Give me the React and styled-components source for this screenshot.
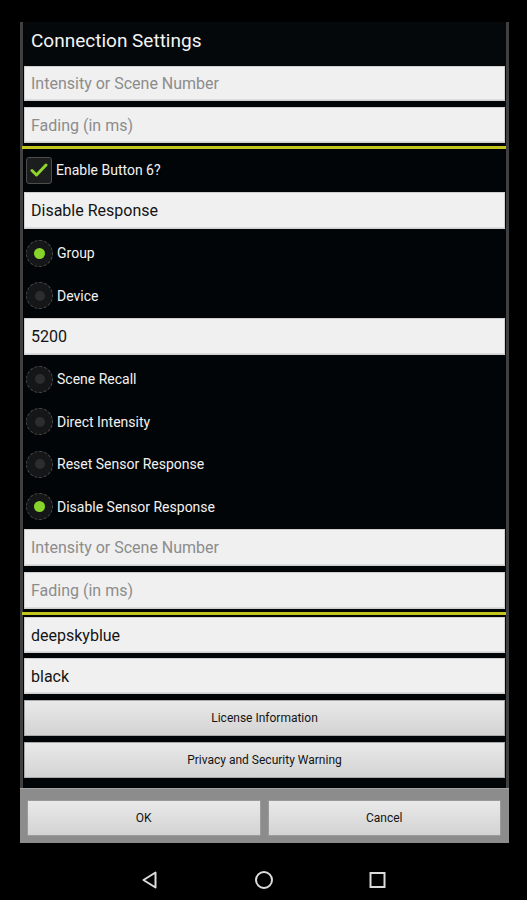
import React from "react";
import styled, { createGlobalStyle } from "styled-components";

const Global = createGlobalStyle`
  html, body { margin: 0; padding: 0; background: #000; }
  body { font-family: Roboto, "Noto Sans", "Liberation Sans", sans-serif; }
  * { box-sizing: border-box; }
`;

const Screen = styled.div`
  width: 527px;
  height: 900px;
  background: #000;
  display: flex;
  flex-direction: column;
  padding-top: 22px;
`;

const Dialog = styled.div`
  margin-left: 20px;
  width: 489px;
  display: flex;
  flex-direction: column;
`;

const Body = styled.div`
  display: flex;
  flex-direction: column;
  border-left: 3px solid #404040;
  border-right: 3px solid #404040;
  background: #020507;
  padding-bottom: 10px;
`;

const Title = styled.div`
  height: 44px;
  display: flex;
  align-items: center;
  padding-left: 8px;
  padding-bottom: 8px;
  color: #f4f4f4;
  font-size: 19px;
  background: #04080a;
`;

const Field = styled.div`
  margin: ${(p) => p.$mt || 0}px 1px 0 1px;
  height: ${(p) => p.$h || 36}px;
  background: #f0f0f0;
  border: 1px solid #cfcfcf;
  box-shadow: inset 0 -1px 0 #dcdcdc;
  display: flex;
  align-items: center;
  padding-left: 6px;
  font-size: 16px;
  color: ${(p) => (p.$placeholder ? "#8c8c8c" : "#141414")};
`;

const Divider = styled.div`
  margin-top: ${(p) => p.$mt || 0}px;
  margin-left: -1px;
  height: 3px;
  background: #c4c51c;
`;

const CheckRow = styled.div`
  height: 42px;
  display: flex;
  align-items: center;
  padding-left: 3px;
  gap: 4px;
  color: #f2f2f2;
  font-size: 14px;
`;

const Box = styled.div`
  width: 26px;
  height: 27px;
  border: 1.5px solid #4d4d4d;
  border-radius: 3px;
  background: #1b1d1e;
  display: flex;
  align-items: center;
  justify-content: center;
`;

const RadioGroup = styled.div`
  display: flex;
  flex-direction: column;
  padding: 3px 0 1px 0;
`;

const RadioRow = styled.div`
  height: 42.5px;
  display: flex;
  align-items: center;
  padding-left: 3px;
  gap: 4px;
  color: #f2f2f2;
  font-size: 14px;
`;

const Radio = styled.div`
  width: 27px;
  height: 27px;
  border-radius: 50%;
  background: #141617;
  border: 1.5px dashed #4a4a4a;
  display: flex;
  align-items: center;
  justify-content: center;
`;

const Dot = styled.div`
  width: ${(p) => (p.$on ? 11 : 10)}px;
  height: ${(p) => (p.$on ? 11 : 10)}px;
  border-radius: 50%;
  background: ${(p) => (p.$on ? "#86d42a" : "#2b2d2e")};
`;

const WideButton = styled.div`
  margin: ${(p) => p.$mt || 0}px 1px 0 1px;
  height: 36px;
  background: linear-gradient(#e9e9e9, #d3d3d3);
  border: 1px solid #a9a9a9;
  display: flex;
  align-items: center;
  justify-content: center;
  font-size: 12px;
  color: #141414;
`;

const Bar = styled.div`
  height: 55px;
  background: #8c8c8c;
  border-top: 1px solid #a4a4a4;
  display: grid;
  grid-template-columns: 1fr 1fr;
  gap: 7px;
  padding: 11px 8px 7px 7px;
`;

const BarButton = styled(WideButton)`
  margin: 0;
  border-color: #9a9a9a;
`;

const Nav = styled.div`
  margin-top: 22px;
  height: 30px;
  display: flex;
  align-items: center;
  justify-content: center;
  gap: 94px;
`;

const NavIcon = styled.svg`
  width: 20px;
  height: 20px;
  display: block;
`;

const RadioItem = ({ on, children }) => (
  <RadioRow>
    <Radio>
      <Dot $on={on} />
    </Radio>
    {children}
  </RadioRow>
);

export default function App() {
  return (
    <>
      <Global />
      <Screen>
        <Dialog>
          <Body>
            <Title>Connection Settings</Title>
            <Field $placeholder $h={35}>Intensity or Scene Number</Field>
            <Field $placeholder $mt={6}>Fading (in ms)</Field>
            <Divider $mt={3} />
            <CheckRow>
              <Box>
                <svg width="18" height="16" viewBox="0 0 18 16">
                  <path d="M2 8.5 L6.5 13 L16 3" fill="none" stroke="#8ed42a" strokeWidth="3" strokeLinecap="round" strokeLinejoin="round" />
                </svg>
              </Box>
              Enable Button 6?
            </CheckRow>
            <Field $mt={1} $h={37}>Disable Response</Field>
            <RadioGroup>
              <RadioItem on>Group</RadioItem>
              <RadioItem>Device</RadioItem>
            </RadioGroup>
            <Field $h={37}>5200</Field>
            <RadioGroup>
              <RadioItem>Scene Recall</RadioItem>
              <RadioItem>Direct Intensity</RadioItem>
              <RadioItem>Reset Sensor Response</RadioItem>
              <RadioItem on>Disable Sensor Response</RadioItem>
            </RadioGroup>
            <Field $placeholder $h={37}>Intensity or Scene Number</Field>
            <Field $placeholder $mt={6} $h={37}>Fading (in ms)</Field>
            <Divider $mt={3} />
            <Field $mt={2}>deepskyblue</Field>
            <Field $mt={5}>black</Field>
            <WideButton $mt={6}>License Information</WideButton>
            <WideButton $mt={6}>Privacy and Security Warning</WideButton>
          </Body>
          <Bar>
            <BarButton>OK</BarButton>
            <BarButton>Cancel</BarButton>
          </Bar>
        </Dialog>
        <Nav>
          <NavIcon viewBox="0 0 20 20">
            <path d="M15.5 2.5 L15.5 17.5 L3.5 10 Z" fill="none" stroke="#dcdcdc" strokeWidth="2" strokeLinejoin="round" />
          </NavIcon>
          <NavIcon viewBox="0 0 20 20">
            <circle cx="10" cy="10" r="8" fill="none" stroke="#dcdcdc" strokeWidth="2" />
          </NavIcon>
          <NavIcon viewBox="0 0 20 20">
            <rect x="2.5" y="3" width="14" height="14" fill="none" stroke="#dcdcdc" strokeWidth="2" />
          </NavIcon>
        </Nav>
      </Screen>
    </>
  );
}
